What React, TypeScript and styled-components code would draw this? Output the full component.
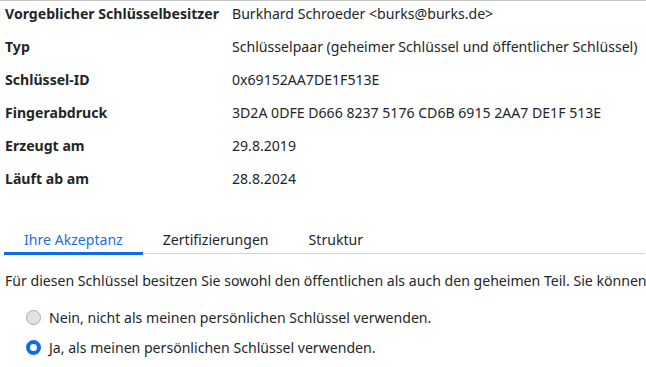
import React from "react";
import styled, { createGlobalStyle } from "styled-components";

const GlobalStyle = createGlobalStyle`
    html, body {
        margin: 0;
        padding: 0;
        background: #ffffff;
        overflow: hidden;
    }
    body {
        font-family: "Noto Sans", "Open Sans", sans-serif;
        font-size: 14.1px;
        color: #232629;
    }
`;

const Page = styled.div`
    width: 646px;
    height: 367px;
    border-top: 1px solid #c4c4c4;
    box-sizing: border-box;
    overflow: hidden;
`;

const InfoGrid = styled.div`
    display: grid;
    grid-template-columns: 227px 1fr;
    grid-auto-rows: 33px;
    align-items: center;
    padding: 0 0 0 5px;
    margin-top: -4px;
`;

const Label = styled.div`
    font-weight: 700;
    white-space: nowrap;
`;

const Value = styled.div`
    white-space: nowrap;
`;

const TabBar = styled.div`
    display: flex;
    margin: 31px 1px 0 4px;
    border-bottom: 1px solid #d4d4d4;
`;

const Tab = styled.div<{ active?: boolean }>`
    padding: 0 20px;
    height: 29px;
    display: flex;
    align-items: center;
    margin-bottom: -2px;
    color: ${(p) => (p.active ? "#1a6fe0" : "#232629")};
    border-bottom: 3px solid ${(p) => (p.active ? "#0d6de8" : "transparent")};
    box-sizing: border-box;
`;

const Intro = styled.div`
    white-space: nowrap;
    padding: 17px 0 0 5px;
`;

const RadioList = styled.div`
    display: flex;
    flex-direction: column;
    gap: 11px;
    padding: 18px 0 0 26px;
`;

const RadioRow = styled.label`
    display: flex;
    align-items: center;
    gap: 8px;
`;

const RadioDot = styled.span<{ checked?: boolean }>`
    width: 15px;
    height: 15px;
    border-radius: 50%;
    box-sizing: border-box;
    flex: none;
    background: ${(p) => (p.checked ? "#ffffff" : "#e2e2e2")};
    border: ${(p) => (p.checked ? "4px solid #0d6de8" : "1px solid #a9a9a9")};
`;

const rows: [string, string][] = [
    ["Vorgeblicher Schlüsselbesitzer", "Burkhard Schroeder <burks@burks.de>"],
    ["Typ", "Schlüsselpaar (geheimer Schlüssel und öffentlicher Schlüssel)"],
    ["Schlüssel-ID", "0x69152AA7DE1F513E"],
    ["Fingerabdruck", "3D2A 0DFE D666 8237 5176 CD6B 6915 2AA7 DE1F 513E"],
    ["Erzeugt am", "29.8.2019"],
    ["Läuft ab am", "28.8.2024"],
];

export default function App() {
    return (
        <Page>
            <GlobalStyle />
            <InfoGrid>
                {rows.map(([l, v]) => (
                    <React.Fragment key={l}>
                        <Label>{l}</Label>
                        <Value>{v}</Value>
                    </React.Fragment>
                ))}
            </InfoGrid>
            <TabBar>
                <Tab active>Ihre Akzeptanz</Tab>
                <Tab>Zertifizierungen</Tab>
                <Tab>Struktur</Tab>
            </TabBar>
            <Intro>
                Für diesen Schlüssel besitzen Sie sowohl den öffentlichen als auch den geheimen Teil. Sie können
            </Intro>
            <RadioList>
                <RadioRow>
                    <RadioDot />
                    Nein, nicht als meinen persönlichen Schlüssel verwenden.
                </RadioRow>
                <RadioRow>
                    <RadioDot checked />
                    Ja, als meinen persönlichen Schlüssel verwenden.
                </RadioRow>
            </RadioList>
        </Page>
    );
}
